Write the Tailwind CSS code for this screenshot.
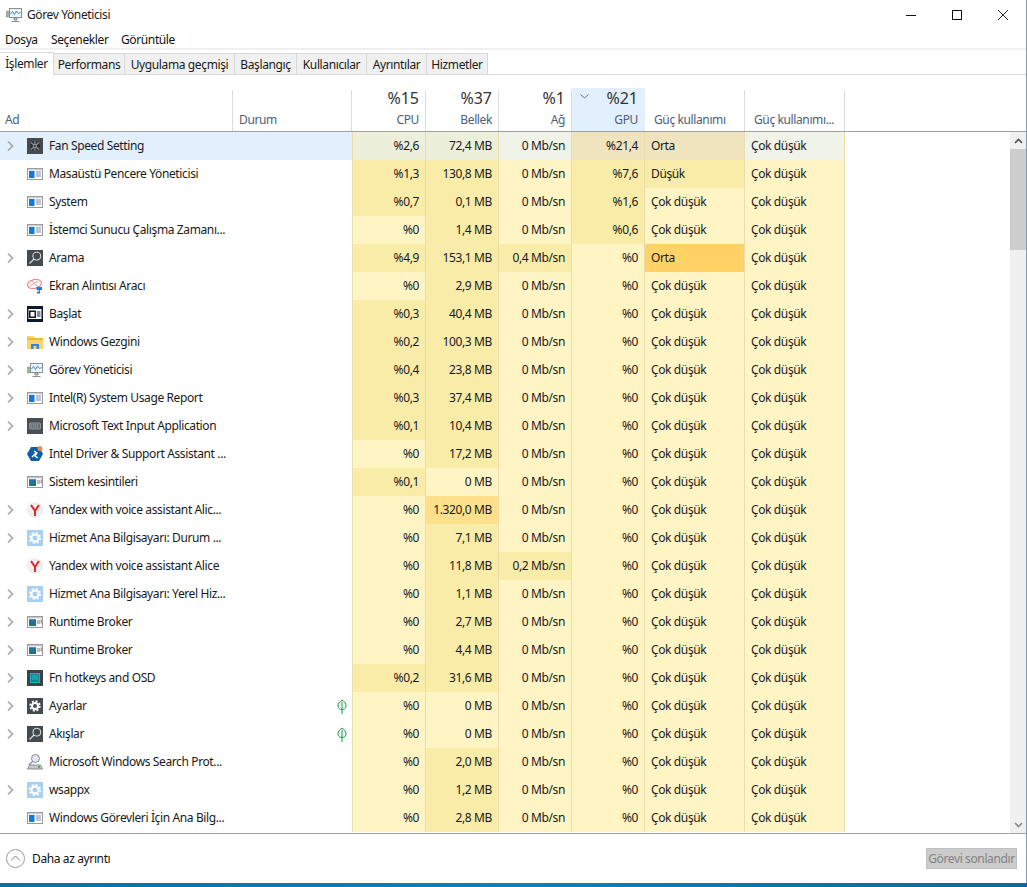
<!DOCTYPE html>
<html lang="tr">
<head>
  <meta charset="UTF-8" />
  <title>Görev Yöneticisi</title>
  <script src="https://cdn.jsdelivr.net/npm/@tailwindcss/browser@4"></script>
</head>
<body class="bg-white overflow-hidden">
  <div class="w-[1027px] h-[887px] flex flex-col overflow-hidden bg-white text-[12px] text-[#1a1a1a] tracking-[-0.38px] font-['Noto_Sans','Open_Sans',sans-serif]">
    <div class="flex-1 flex flex-col min-h-0 border-r border-[#8a9aa8]">
      <!-- Title bar -->
      <div class="h-[30px] shrink-0 flex items-center">
        <svg class="ml-[6px] w-[16px] h-[16px]" viewBox="0 0 16 16">
          <rect x="0.5" y="4" width="2" height="6" fill="#8fb98f" stroke="#888" stroke-width="0.5"/>
          <rect x="3.5" y="1.5" width="12" height="9" fill="#eef5fb" stroke="#8a8f94"/>
          <path d="M4.5 7l2-2.5 2 3 2-3.5 2 2.5 2-1" fill="none" stroke="#2f8fd0"/>
          <path d="M8 11h3v2H8zM5.5 14.5h8" stroke="#8a8f94" fill="#c8ccd0"/>
        </svg>
        <span class="ml-[5px]">Görev Yöneticisi</span>
        <div class="ml-auto flex h-full">
          <div class="w-[46px] flex items-center justify-center"><svg class="w-[10px] h-[10px]" viewBox="0 0 10 10"><path d="M0 5.5h10" stroke="#111"/></svg></div>
          <div class="w-[46px] flex items-center justify-center"><svg class="w-[10px] h-[10px]" viewBox="0 0 10 10"><rect x="0.5" y="0.5" width="9" height="9" fill="none" stroke="#111"/></svg></div>
          <div class="w-[46px] flex items-center justify-center"><svg class="w-[10px] h-[10px]" viewBox="0 0 10 10"><path d="M0 0l10 10M10 0L0 10" stroke="#111" stroke-width="0.9"/></svg></div>
        </div>
      </div>
      <!-- Menu -->
      <div class="h-[20px] shrink-0 flex items-center pt-[1px] border-b-2 border-[#f0f0f0] text-[#111]">
        <span class="w-[46px] pl-[5px]">Dosya</span>
        <span class="w-[70px] pl-[5px]">Seçenekler</span>
        <span class="pl-[5px]">Görüntüle</span>
      </div>
      <!-- Tabs -->
      <div class="h-[25px] shrink-0 flex items-end border-b border-[#d9d9d9]">
        <div class="w-[54px] h-[23px] -mb-px bg-white border-r border-t border-[#d9d9d9] flex items-center justify-center relative z-10">İşlemler</div>
        <div class="w-[71px] h-[21px] pt-[1px] bg-[#f0f0f0] border-r border-t border-[#d9d9d9] flex items-center justify-center">Performans</div>
        <div class="w-[110px] h-[21px] pt-[1px] bg-[#f0f0f0] border-r border-t border-[#d9d9d9] flex items-center justify-center">Uygulama geçmişi</div>
        <div class="w-[62px] h-[21px] pt-[1px] bg-[#f0f0f0] border-r border-t border-[#d9d9d9] flex items-center justify-center">Başlangıç</div>
        <div class="w-[70px] h-[21px] pt-[1px] bg-[#f0f0f0] border-r border-t border-[#d9d9d9] flex items-center justify-center">Kullanıcılar</div>
        <div class="w-[60px] h-[21px] pt-[1px] bg-[#f0f0f0] border-r border-t border-[#d9d9d9] flex items-center justify-center">Ayrıntılar</div>
        <div class="w-[61px] h-[21px] pt-[1px] bg-[#f0f0f0] border-r border-t border-[#d9d9d9] flex items-center justify-center">Hizmetler</div>
      </div>
      <!-- Column header -->
      <div class="h-[57px] shrink-0 border-b border-[#a0a0a0] grid grid-cols-[233px_119px_74px_73px_73px_73px_100px_100px] w-full items-end text-[#4c607a]">
        <div class="h-[41px] border-r border-[#dcdcdc] flex items-end pl-[5px] pb-[2px]">Ad</div>
        <div class="h-[41px] border-r border-[#dcdcdc] flex items-end pl-[6px] pb-[2px]">Durum</div>
        <div class="h-[41px] border-r border-[#dcdcdc] flex flex-col items-end justify-between pr-[6px] pb-[2px]"><span class="-mt-[2px] text-[16px] leading-[20px] text-[#333] tracking-normal">%15</span><span>CPU</span></div>
        <div class="h-[41px] border-r border-[#dcdcdc] flex flex-col items-end justify-between pr-[6px] pb-[2px]"><span class="-mt-[2px] text-[16px] leading-[20px] text-[#333] tracking-normal">%37</span><span>Bellek</span></div>
        <div class="h-[41px] border-r border-[#dcdcdc] flex flex-col items-end justify-between pr-[6px] pb-[2px]"><span class="-mt-[2px] text-[16px] leading-[20px] text-[#333] tracking-normal">%1</span><span>Ağ</span></div>
        <div class="h-[43px] bg-[#e1f0fc] relative flex flex-col items-end justify-between pr-[7px] pb-[2px]">
          <svg class="absolute left-[8px] top-[6px] w-[9px] h-[5px]" viewBox="0 0 9 5"><path d="M0.5 0.5L4.5 4l4-3.5" fill="none" stroke="#5f7890"/></svg>
          <span class="text-[16px] leading-[20px] text-[#333] tracking-normal">%21</span><span>GPU</span>
        </div>
        <div class="h-[41px] border-r border-[#dcdcdc] flex items-end pl-[9px] pb-[2px]">Güç kullanımı</div>
        <div class="h-[41px] border-r border-[#dcdcdc] flex items-end pl-[9px] pb-[2px]">Güç kullanımı...</div>
      </div>
      <!-- Table + scrollbar -->
      <div class="flex-1 min-h-0 flex">
        <div id="rows" class="flex-1 min-w-0 overflow-hidden"></div>
        <div class="w-[16px] shrink-0 bg-[#f0f0f0] flex flex-col">
          <div class="h-[17px] flex items-center justify-center"><svg class="w-[9px] h-[6px]" viewBox="0 0 9 6"><path d="M1 5l3.5-3.5L8 5" fill="none" stroke="#555" stroke-width="1.6"/></svg></div>
          <div class="h-[101px] bg-[#cdcdcd]"></div>
          <div class="flex-1"></div>
          <div class="h-[17px] flex items-center justify-center"><svg class="w-[9px] h-[6px]" viewBox="0 0 9 6"><path d="M1 1l3.5 3.5L8 1" fill="none" stroke="#8a8a8a" stroke-width="1.6"/></svg></div>
        </div>
      </div>
      <!-- Footer -->
      <div class="h-[50px] shrink-0 border-t border-[#a0a0a0] flex items-center">
        <svg class="ml-[6px] w-[19px] h-[19px]" viewBox="0 0 19 19"><circle cx="9.5" cy="9.5" r="9" fill="none" stroke="#9a9a9a"/><path d="M5 11.5l4.5-4.5 4.5 4.5" fill="none" stroke="#7f7f7f"/></svg>
        <span class="ml-[7px] text-[#111]">Daha az ayrıntı</span>
        <div class="ml-auto mr-[9px] w-[91px] h-[21px] bg-[#cccccc] border border-[#bfbfbf] text-[#838383] whitespace-nowrap flex items-center justify-center">Görevi sonlandır</div>
      </div>
    </div>
    <div class="h-[4px] shrink-0 bg-gradient-to-r from-[#0a6fa8] via-[#0a82bd] to-[#0a6a9f]"></div>
  </div>

  <script>
    const i = {
      app: '<rect x="0.5" y="2.5" width="15" height="11" fill="#fff" stroke="#9a9a9a"/><rect x="1" y="3" width="14" height="1.5" fill="#d4d4d4"/><rect x="2" y="5" width="5.500" height="7" fill="#1578d4"/><path d="M9 6h5M9 8h5M9 10h5" stroke="#7a8a9a"/>',
      app2: '<rect x="0.5" y="2.5" width="15" height="11" fill="#fff" stroke="#9a9a9a"/><rect x="1" y="3" width="14" height="1.5" fill="#c9c9c9"/><rect x="2" y="5.5" width="7" height="6.5" fill="#1f7a6c"/><rect x="2" y="5.5" width="7" height="3" fill="#2a6cb0"/><path d="M10 7h3M10 9h3M14.2 5.5v4" stroke="#6a7a6a"/>',
      fan: '<rect width="16" height="16" fill="#454a4e"/><circle cx="8" cy="8" r="5" fill="#2b2f33"/><path d="M4 4.500l8 7M12 4.500l-8 7M8 3v10" stroke="#8f9498" stroke-width="1.200"/><circle cx="8" cy="8" r="1.500" fill="#2b2f33" stroke="#b8bcc0" stroke-width="0.600"/>',
      search: '<rect width="16" height="16" fill="#454a4e"/><circle cx="9.800" cy="6.200" r="4" fill="none" stroke="#e8e8e8"/><path d="M7 9l-4.500 4.500" stroke="#d8d8d8" stroke-width="1.200"/>',
      snip: '<ellipse cx="7.5" cy="6" rx="7" ry="4.5" fill="#fdf4f4" stroke="#e77a7a" transform="rotate(-15 7.5 6)"/><path d="M3 8l8-5M5 3l7 7" stroke="#c99" stroke-width="0.8"/><path d="M9.500 9h5.500v3h-2v3.500h-3z" fill="#1a7fd4"/><circle cx="11" cy="13" r="0.900" fill="#fff"/>',
      start: '<rect width="16" height="16" fill="#0c1a2c"/><rect x="1.500" y="3" width="13" height="10" fill="#fff"/><rect x="2.500" y="5" width="6" height="6.500" fill="#0c1a2c" stroke="#0c1a2c"/><rect x="3.500" y="6" width="4" height="4.500" fill="#fff"/><path d="M10 6h3.500M10 8h3.500M10 10h3.500" stroke="#0c1a2c"/>',
      folder: '<path d="M0 2h6l2 2h8v11H0z" fill="#fbd467"/><rect y="4" width="16" height="2" fill="#f0b93a"/><rect x="4" y="10" width="8" height="5" fill="#2f86d6"/><rect x="6.500" y="12" width="3" height="3" fill="#fbd467"/>',
      task: '<rect x="0.500" y="5" width="2" height="6" fill="#8fb98f" stroke="#888" stroke-width="0.500"/><rect x="3.500" y="1.500" width="12" height="9" fill="#eef5fb" stroke="#8a8f94"/><path d="M4.500 7l2-2.500 2 3 2-3.500 2 2.500 2-1" fill="none" stroke="#2f8fd0"/><path d="M8 11h3v2H8zM5.500 14.500h8" stroke="#8a8f94" fill="#c8ccd0"/>',
      keyboard: '<rect width="16" height="16" fill="#4a4f53"/><rect x="2.500" y="5" width="11" height="6" rx="0.500" fill="#6a6f73" stroke="#8f9396"/><path d="M4 7h8M4 9h8" stroke="#a4a8ab" stroke-dasharray="1 1"/>',
      intel: '<path d="M4 1h8l4 7-4 7H4L0 8z" fill="#0f5fa8"/><path d="M5 11l4-4M7 5l3 2-2 3 3 2" fill="none" stroke="#fff" stroke-width="1.300"/><circle cx="13" cy="2.500" r="2.500" fill="#f08a4b"/>',
      yandex: '<circle cx="8" cy="8" r="8" fill="#efefef"/><path d="M4 3l4 6 4-6M8 9v5" fill="none" stroke="#e0272b" stroke-width="2"/>',
      gear: '<rect width="16" height="16" fill="#a9d0f0"/><circle cx="8" cy="8" r="3.500" fill="none" stroke="#fff" stroke-width="2"/><circle cx="8" cy="8" r="5.200" fill="none" stroke="#fff" stroke-width="1.800" stroke-dasharray="2 2.080"/>',
      fn: '<rect width="16" height="16" fill="#3d4347"/><rect x="3.500" y="3.500" width="9" height="9" fill="#1f7f8e" stroke="#17b4c6"/><rect x="5" y="5" width="6" height="5" fill="#2b9aa8"/>',
      settings: '<rect width="16" height="16" fill="#454a4e"/><circle cx="8" cy="8" r="3" fill="none" stroke="#fff" stroke-width="2"/><circle cx="8" cy="8" r="4.800" fill="none" stroke="#fff" stroke-width="1.800" stroke-dasharray="2 1.770"/>',
      prot: '<circle cx="8.500" cy="4.500" r="4" fill="#dfe6ee" stroke="#7f8a96"/><path d="M5.500 7.500L2 11" stroke="#7f8a96" stroke-width="1.200"/><path d="M0.500 15l2-4h11l2 4z" fill="#c4c9ce" stroke="#8a8f94"/><rect x="11" y="12" width="2" height="2" fill="#4caf50"/>'
    };

    const L = 'bg-[#fff4c4]', M = 'bg-[#f9eca8]', H = 'bg-[#ffe08a]', O = 'bg-[#ffd266]';
    const C = 'bg-[#ecf0da]', N = 'bg-[#eff3e8]', G = 'bg-[#f0e4bf]';
    const cok = 'Çok düşük';

    // icon, chevron, name, leaf, cpu, mem, net, gpu, power
    const rows = [
      ['fan', 1, 'Fan Speed Setting', 0, '%2,6', '72,4 MB', '0 Mb/sn', '%21,4', 'Orta'],
      ['app', 0, 'Masaüstü Pencere Yöneticisi', 0, '%1,3', '130,8 MB', '0 Mb/sn', '%7,6', 'Düşük'],
      ['app', 0, 'System', 0, '%0,7', '0,1 MB', '0 Mb/sn', '%1,6', cok],
      ['app', 0, 'İstemci Sunucu Çalışma Zamanı...', 0, '%0', '1,4 MB', '0 Mb/sn', '%0,6', cok],
      ['search', 1, 'Arama', 0, '%4,9', '153,1 MB', '0,4 Mb/sn', '%0', 'Orta'],
      ['snip', 0, 'Ekran Alıntısı Aracı', 0, '%0', '2,9 MB', '0 Mb/sn', '%0', cok],
      ['start', 1, 'Başlat', 0, '%0,3', '40,4 MB', '0 Mb/sn', '%0', cok],
      ['folder', 1, 'Windows Gezgini', 0, '%0,2', '100,3 MB', '0 Mb/sn', '%0', cok],
      ['task', 1, 'Görev Yöneticisi', 0, '%0,4', '23,8 MB', '0 Mb/sn', '%0', cok],
      ['app', 1, 'Intel(R) System Usage Report', 0, '%0,3', '37,4 MB', '0 Mb/sn', '%0', cok],
      ['keyboard', 1, 'Microsoft Text Input Application', 0, '%0,1', '10,4 MB', '0 Mb/sn', '%0', cok],
      ['intel', 0, 'Intel Driver & Support Assistant ...', 0, '%0', '17,2 MB', '0 Mb/sn', '%0', cok],
      ['app2', 0, 'Sistem kesintileri', 0, '%0,1', '0 MB', '0 Mb/sn', '%0', cok],
      ['yandex', 1, 'Yandex with voice assistant Alic...', 0, '%0', '1.320,0 MB', '0 Mb/sn', '%0', cok],
      ['gear', 1, 'Hizmet Ana Bilgisayarı: Durum ...', 0, '%0', '7,1 MB', '0 Mb/sn', '%0', cok],
      ['yandex', 0, 'Yandex with voice assistant Alice', 0, '%0', '11,8 MB', '0,2 Mb/sn', '%0', cok],
      ['gear', 1, 'Hizmet Ana Bilgisayarı: Yerel Hiz...', 0, '%0', '1,1 MB', '0 Mb/sn', '%0', cok],
      ['app2', 1, 'Runtime Broker', 0, '%0', '2,7 MB', '0 Mb/sn', '%0', cok],
      ['app2', 1, 'Runtime Broker', 0, '%0', '4,4 MB', '0 Mb/sn', '%0', cok],
      ['fn', 1, 'Fn hotkeys and OSD', 0, '%0,2', '31,6 MB', '0 Mb/sn', '%0', cok],
      ['settings', 1, 'Ayarlar', 1, '%0', '0 MB', '0 Mb/sn', '%0', cok],
      ['search', 1, 'Akışlar', 1, '%0', '0 MB', '0 Mb/sn', '%0', cok],
      ['prot', 0, 'Microsoft Windows Search Prot...', 0, '%0', '2,0 MB', '0 Mb/sn', '%0', cok],
      ['gear', 1, 'wsappx', 0, '%0', '1,2 MB', '0 Mb/sn', '%0', cok],
      ['app', 0, 'Windows Görevleri İçin Ana Bilg...', 0, '%0', '2,8 MB', '0 Mb/sn', '%0', cok]
    ];

    const chevron = '<svg class="absolute left-[7px] top-[9px] w-[7px] h-[10px]" viewBox="0 0 7 10"><path d="M1 0.500L5.500 5 1 9.500" fill="none" stroke="#a6a6a6" stroke-width="1.600"/></svg>';
    const leaf = '<svg class="w-[10px] h-[15px] mr-[5px]" viewBox="0 0 10 15"><path d="M5 1C8 3 9 5 9 7c0 2-2 3.500-4 3.500S1 9 1 7c0-2 1-4 4-6zM5 3v12" fill="none" stroke="#0e9a3e"/></svg>';

    document.getElementById('rows').innerHTML = rows.map((r, n) => {
      const [icon, chev, name, lf, cpu, mem, net, gpu, power] = r;
      const first = n === 0;
      const cpuBg = first ? C : (cpu === '%0' ? L : M);
      const memBg = first ? C : (mem === '0 MB' ? L : mem.startsWith('1.320') ? H : M);
      const netBg = first ? N : (net === '0 Mb/sn' ? L : M);
      const gpuBg = first ? G : (gpu === '%0' ? L : M);
      const powBg = first ? G : (power === 'Orta' ? O : power === 'Düşük' ? M : L);
      const trendBg = first ? N : L;
      return `<div class="h-[28px] w-[845px] grid grid-cols-[233px_119px_74px_73px_73px_73px_100px_100px]">
        <div class="relative flex items-center ${first ? 'bg-[#e1f0fc]' : ''}">
          ${chev ? chevron : ''}
          <svg class="ml-[27px] w-[16px] h-[16px] shrink-0" viewBox="0 0 16 16">${i[icon]}</svg>
          <span class="ml-[6px] whitespace-nowrap">${name.replace('&', '&amp;')}</span>
        </div>
        <div class="flex items-center justify-end ${first ? 'bg-[#e1f0fc]' : ''}">${lf ? leaf : ''}</div>
        <div class="${cpuBg} border-l border-r border-[#ecdcab] flex items-center justify-end pr-[6px]">${cpu}</div>
        <div class="${memBg} border-r border-[#ecdcab] flex items-center justify-end pr-[6px]">${mem}</div>
        <div class="${netBg} border-r border-[#ecdcab] flex items-center justify-end pr-[6px]">${net}</div>
        <div class="${gpuBg} border-r border-[#ecdcab] flex items-center justify-end pr-[6px]">${gpu}</div>
        <div class="${powBg} border-r border-[#ecdcab] flex items-center pl-[6px]">${power}</div>
        <div class="${trendBg} border-r border-[#ecdcab] flex items-center pl-[6px]">${cok}</div>
      </div>`;
    }).join('');
  </script>
</body>
</html>
